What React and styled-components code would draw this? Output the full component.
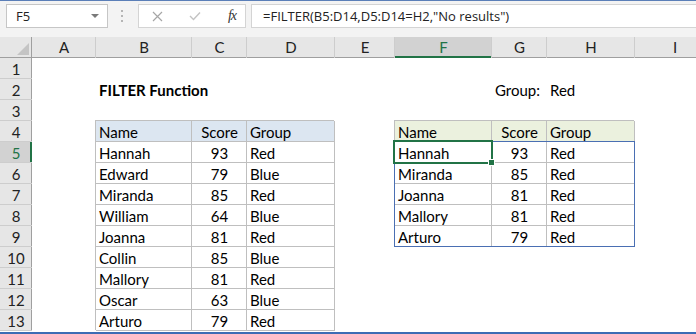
import React from 'react';
import styled, { createGlobalStyle } from 'styled-components';

const GlobalStyle = createGlobalStyle`
    html, body {
        margin: 0;
        padding: 0;
        background: #fff;
        overflow: hidden;
    }
    body {
        font-family: Lato, "Open Sans", sans-serif;
        color: #000;
    }
`;

const GREEN = '#217346';
const GRID = '#bfbfbf';
const COLS = [32, 64, 96, 55, 88, 60, 97, 55, 88, 80];
const LETTERS = ['A', 'B', 'C', 'D', 'E', 'F', 'G', 'H', 'I'];
const VISIBLE_ROWS = 13;

const Window = styled.div`
    width: 696px;
    height: 334px;
    display: flex;
    flex-direction: column;
    border-top: 1px solid #5b7fb8;
    border-bottom: 2px solid #3c6cb4;
    box-sizing: border-box;
    overflow: hidden;
`;

/* ---------- formula bar ---------- */

const Toolbar = styled.div`
    display: flex;
    align-items: center;
    height: 24px;
    padding: 3px 0 9px 6px;
    background: #f3f3f3;
    flex-shrink: 0;
`;

const NameBox = styled.div`
    width: 102px;
    height: 24px;
    box-sizing: border-box;
    border: 1px solid #c6c6c6;
    background: #fff;
    display: flex;
    align-items: center;
    justify-content: space-between;
    padding: 0 8px 0 9px;
    font-family: "Open Sans", sans-serif;
    font-size: 13px;
    color: #222;
`;

const Caret = styled.span`
    width: 0;
    height: 0;
    border-left: 4px solid transparent;
    border-right: 4px solid transparent;
    border-top: 4px solid #7a7a7a;
`;

const Grip = styled.div`
    width: 2px;
    margin: 0 15px 0 13px;
    display: flex;
    flex-direction: column;
    gap: 3px;
    span {
        width: 2px;
        height: 2px;
        background: #b5b5b5;
    }
`;

const ButtonsBox = styled.div`
    width: 108px;
    height: 24px;
    box-sizing: border-box;
    border: 1px solid #d4d4d4;
    background: #fff;
    display: flex;
    align-items: center;
    justify-content: space-between;
    padding: 0 9px 0 13px;
    margin-right: 5px;
`;

const Fx = styled.span`
    font-family: "Liberation Serif", serif;
    font-style: italic;
    font-size: 14px;
    color: #333;
    letter-spacing: -1px;
`;

const FormulaInput = styled.div`
    flex: 1;
    height: 24px;
    box-sizing: border-box;
    border: 1px solid #d4d4d4;
    border-right: none;
    background: #fff;
    display: flex;
    align-items: center;
    padding-left: 11px;
    font-family: "Open Sans", sans-serif;
    font-size: 13px;
    color: #222;
    white-space: nowrap;
`;

/* ---------- sheet ---------- */

const Sheet = styled.div`
    flex: 1;
    display: grid;
    grid-template-columns: ${COLS.map((w) => `${w}px`).join(' ')};
    grid-auto-rows: 21px;
    background: #fff;
    overflow: hidden;
    font-size: 15px;
`;

const Corner = styled.div`
    background: #e6e6e6;
    box-shadow: inset -1px -1px 0 #9f9f9f;
    position: relative;
    &::after {
        content: '';
        position: absolute;
        right: 3px;
        bottom: 3px;
        border-left: 12px solid transparent;
        border-bottom: 12px solid #c4c4c4;
    }
`;

const ColHead = styled.div`
    background: ${(p) => (p.$active ? '#d2d2d2' : '#e6e6e6')};
    color: ${(p) => (p.$active ? GREEN : '#222')};
    box-shadow: inset -1px 0 0 #cdcdcd,
        inset 0 ${(p) => (p.$active ? '-2px 0 ' + GREEN : '-1px 0 #9f9f9f')};
    display: flex;
    align-items: center;
    justify-content: center;
    padding-bottom: 1px;
    box-sizing: border-box;
`;

const RowHead = styled.div`
    grid-column: 1;
    background: ${(p) => (p.$active ? '#d2d2d2' : '#e6e6e6')};
    color: ${(p) => (p.$active ? GREEN : '#222')};
    box-shadow: inset 0 -1px 0 #cdcdcd,
        inset ${(p) => (p.$active ? '-2px 0 0 ' + GREEN : '-1px 0 0 #9f9f9f')};
    display: flex;
    align-items: center;
    justify-content: center;
    padding-top: 1px;
    box-sizing: border-box;
`;

const Cell = styled.div`
    grid-column: ${(p) => p.$col};
    grid-row: ${(p) => p.$row + 1};
    padding: 1px 3px 0;
    line-height: 21px;
    white-space: nowrap;
    font-weight: ${(p) => (p.$bold ? 700 : 400)};
`;

const Table = styled.div`
    grid-column: ${(p) => p.$cols};
    grid-row: ${(p) => p.$rows};
    display: grid;
    grid-template-columns: ${(p) => p.$widths};
    grid-auto-rows: 21px;
    box-shadow: -1px -1px 0 ${GRID};
    align-self: start;
`;

const TCell = styled.div`
    position: relative;
    line-height: 21px;
    padding: 1px 3px 0;
    box-sizing: border-box;
    white-space: nowrap;
    text-align: ${(p) => (p.$center ? 'center' : 'left')};
    background: ${(p) => p.$bg || 'transparent'};
    box-shadow: inset -1px -1px 0 ${GRID};
`;

const DataBlock = styled.div`
    grid-column: 1 / -1;
    grid-row: span ${(p) => p.$rows};
    display: grid;
    grid-template-columns: ${(p) => p.$widths};
    grid-auto-rows: 21px;
    position: relative;
    &::after {
        content: '';
        position: absolute;
        inset: -1px 0 0 -1px;
        border: 1px solid #4a6fb3;
        pointer-events: none;
    }
`;

const Selection = styled.div`
    position: absolute;
    left: -2px;
    top: -2px;
    right: -1px;
    bottom: -1px;
    border: 2px solid ${GREEN};
    pointer-events: none;
    z-index: 2;
    &::after {
        content: '';
        position: absolute;
        right: -4px;
        bottom: -4px;
        width: 5px;
        height: 5px;
        background: ${GREEN};
        border: 1px solid #fff;
    }
`;

const people = [
    ['Hannah', 93, 'Red'],
    ['Edward', 79, 'Blue'],
    ['Miranda', 85, 'Red'],
    ['William', 64, 'Blue'],
    ['Joanna', 81, 'Red'],
    ['Collin', 85, 'Blue'],
    ['Mallory', 81, 'Red'],
    ['Oscar', 63, 'Blue'],
    ['Arturo', 79, 'Red'],
];

const filtered = people.filter((p) => p[2] === 'Red');

function Cross() {
    return (
        <svg width="11" height="11" viewBox="0 0 11 11">
            <path d="M1 1 L10 10 M10 1 L1 10" stroke="#a6a6a6" strokeWidth="1.2" />
        </svg>
    );
}

function Check() {
    return (
        <svg width="12" height="10" viewBox="0 0 12 10">
            <path d="M1 5 L4.5 8.5 L11 1.5" stroke="#c3c3c3" strokeWidth="1.4" fill="none" />
        </svg>
    );
}

function Headers({ bg }) {
    return (
        <>
            <TCell $bg={bg}>Name</TCell>
            <TCell $bg={bg} $center>Score</TCell>
            <TCell $bg={bg}>Group</TCell>
        </>
    );
}

export default function App() {
    return (
        <>
            <GlobalStyle />
            <Window>
                <Toolbar>
                    <NameBox>
                        F5
                        <Caret />
                    </NameBox>
                    <Grip>
                        <span />
                        <span />
                        <span />
                    </Grip>
                    <ButtonsBox>
                        <Cross />
                        <Check />
                        <Fx>fx</Fx>
                    </ButtonsBox>
                    <FormulaInput>=FILTER(B5:D14,D5:D14=H2,"No results")</FormulaInput>
                </Toolbar>

                <Sheet>
                    <Corner />
                    {LETTERS.map((l) => (
                        <ColHead key={l} $active={l === 'F'}>{l}</ColHead>
                    ))}
                    {Array.from({ length: VISIBLE_ROWS }, (_, i) => (
                        <RowHead key={i} style={{ gridRow: i + 2 }} $active={i + 1 === 5}>
                            {i + 1}
                        </RowHead>
                    ))}

                    <Cell $col={3} $row={2} $bold>FILTER Function</Cell>
                    <Cell $col={8} $row={2}>Group:</Cell>
                    <Cell $col={9} $row={2}>Red</Cell>

                    <Table $cols="3 / 6" $rows="5 / 15" $widths="96px 55px 88px">
                        <Headers bg="#dce6f1" />
                        {people.map(([name, score, group]) => (
                            <React.Fragment key={name}>
                                <TCell>{name}</TCell>
                                <TCell $center>{score}</TCell>
                                <TCell>{group}</TCell>
                            </React.Fragment>
                        ))}
                    </Table>

                    <Table $cols="7 / 10" $rows="5 / 11" $widths="97px 55px 88px">
                        <Headers bg="#ebf1de" />
                        <DataBlock $rows={filtered.length} $widths="97px 55px 88px">
                            {filtered.map(([name, score, group], i) => (
                                <React.Fragment key={name}>
                                    <TCell>
                                        {name}
                                        {i === 0 && <Selection />}
                                    </TCell>
                                    <TCell $center>{score}</TCell>
                                    <TCell>{group}</TCell>
                                </React.Fragment>
                            ))}
                        </DataBlock>
                    </Table>
                </Sheet>
            </Window>
        </>
    );
}
